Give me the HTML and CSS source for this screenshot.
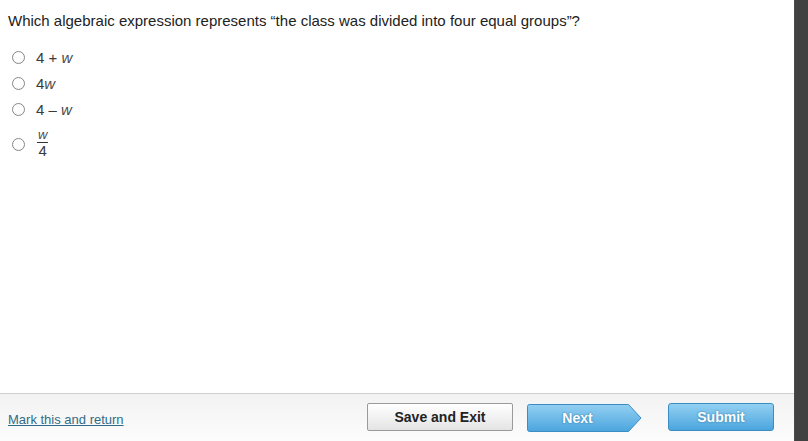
FILE: index.html
```html
<!DOCTYPE html>
<html>
<head>
<meta charset="utf-8">
<link rel="stylesheet" href="styles.css">
</head>
<body>
<div class="page">
  <div class="main">
    <div class="content">
      <p class="question">Which algebraic expression represents “the class was divided into four equal groups”?</p>
      <ul class="options">
        <li class="opt"><span class="radio"></span><span class="expr">4 + <i>w</i></span></li>
        <li class="opt"><span class="radio"></span><span class="expr">4<i>w</i></span></li>
        <li class="opt"><span class="radio"></span><span class="expr">4 – <i>w</i></span></li>
        <li class="opt opt-frac"><span class="radio"></span><span class="frac"><span class="num"><i>w</i></span><span class="den">4</span></span></li>
      </ul>
    </div>
    <div class="footer">
      <a class="mark" href="#">Mark this and return</a>
      <div class="buttons">
        <button class="btn btn-save">Save and Exit</button>
        <button class="btn btn-next">
          <svg class="next-shape" width="115" height="28" viewBox="0 0 115 28">
            <defs>
              <linearGradient id="g" x1="0" y1="0" x2="0" y2="1">
                <stop offset="0" stop-color="#93d0f2"/>
                <stop offset="1" stop-color="#4ba5de"/>
              </linearGradient>
            </defs>
            <path d="M2.5 0.5 H101.5 L114 14 L101.5 27.5 H2.5 Q0.5 27.5 0.5 25.5 V2.5 Q0.5 0.5 2.5 0.5 Z" fill="url(#g)" stroke="#3b8cc2"/>
          </svg>
          <span class="next-label">Next</span>
        </button>
        <button class="btn btn-submit">Submit</button>
      </div>
    </div>
  </div>
  <div class="strip"></div>
</div>
</body>
</html>
```

FILE: styles.css
```css
html, body {
  margin: 0;
  padding: 0;
  width: 808px;
  height: 441px;
  overflow: hidden;
  background: #fff;
  font-family: "Liberation Sans", Arial, sans-serif;
}

.page {
  display: flex;
  width: 808px;
  height: 441px;
}

.main {
  width: 794px;
  display: flex;
  flex-direction: column;
}

.strip {
  width: 14px;
  background: #414141;
  border-left: 1px solid #4a4a4a;
  box-sizing: border-box;
}

.content {
  flex: 1;
  padding: 11px 0 0 8px;
}

.question {
  margin: 0;
  font-size: 15px;
  color: #222;
  line-height: 19px;
}

.options {
  list-style: none;
  margin: 14px 0 0 0;
  padding: 0;
}

.opt {
  display: flex;
  align-items: center;
  height: 26px;
  font-size: 15px;
  color: #3a3a3a;
}

.opt i {
  font-style: italic;
  color: #4a4a4a;
}

.radio {
  width: 11px;
  height: 11px;
  border: 1px solid #888;
  border-radius: 50%;
  box-sizing: content-box;
  margin: 0 11px 0 4px;
  background: radial-gradient(circle at 50% 40%, #fff 50%, #eee 100%);
}

.opt-frac {
  height: 44px;
}

.frac {
  display: inline-flex;
  flex-direction: column;
  align-items: center;
  margin-left: 1px;
  margin-top: -1px;
}

.num {
  font-size: 13px;
  line-height: 13px;
  padding: 0 1px 1px;
  border-bottom: 1px solid #333;
}

.den {
  font-size: 15px;
  line-height: 16px;
}

.footer {
  height: 48px;
  box-sizing: border-box;
  border-top: 1px solid #cfcfcf;
  background: linear-gradient(#f2f2f2, #fcfcfc);
  display: flex;
  align-items: center;
  justify-content: space-between;
  padding: 0 20px 0 8px;
}

.mark {
  font-size: 13px;
  color: #2f6d87;
  text-decoration: underline;
  margin-top: 3px;
}

.buttons {
  display: flex;
  align-items: center;
}

.btn {
  font-family: "Liberation Sans", Arial, sans-serif;
  font-weight: bold;
  font-size: 14px;
  height: 28px;
  padding: 0;
  cursor: pointer;
}

.btn-save {
  width: 146px;
  margin-left: 1px;
  border: 1px solid #9a9a9a;
  border-radius: 2px;
  color: #222;
  background: linear-gradient(#ffffff, #e4e4e4);
  margin-top: -2px;
}

.btn-next {
  position: relative;
  width: 115px;
  margin-left: 14px;
  border: none;
  background: none;
  color: #fff;
  margin-top: 0;
}

.next-shape {
  position: absolute;
  left: 0;
  top: 0;
}

.next-label {
  position: relative;
  display: block;
  width: 101px;
  text-align: center;
  text-shadow: 0 0 2px #2a6e9e;
}

.btn-submit {
  width: 106px;
  margin-left: 26px;
  border: 1px solid #3b8cc2;
  border-radius: 3px;
  color: #fff;
  background: linear-gradient(#93d0f2, #4ba5de);
  text-shadow: 0 0 2px #2a6e9e;
  margin-top: -2px;
}
```
